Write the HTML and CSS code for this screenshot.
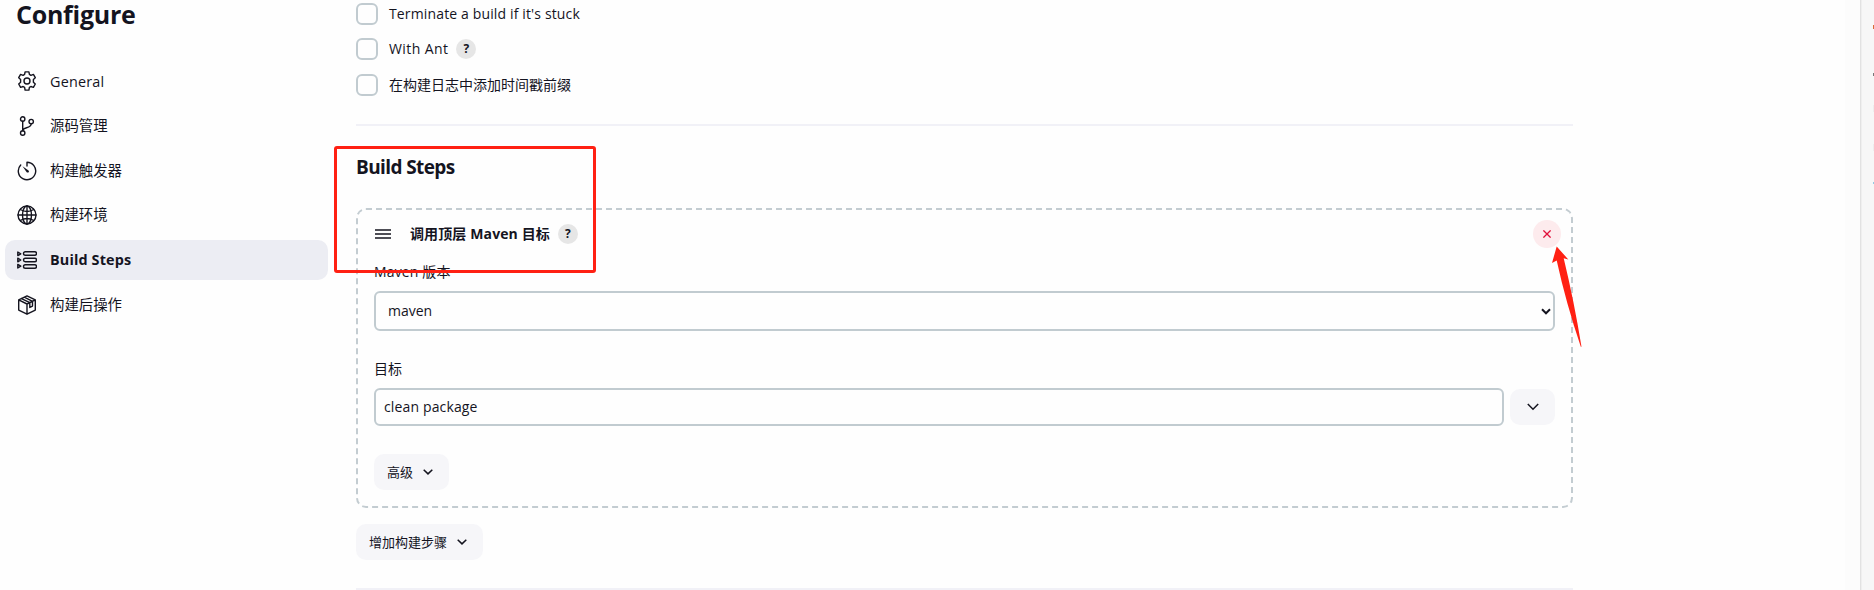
FILE: index.html
```html
<!DOCTYPE html>
<html lang="zh-CN">
<head>
<meta charset="utf-8">
<title>Configure</title>
<link rel="stylesheet" href="styles.css">
</head>
<body>
<div class="page">
  <aside class="sidebar">
    <h1 class="title">Configure</h1>
    <nav class="tasks">
      <a class="task task-general"><svg class="icon" viewBox="0 0 20 20"><path d="M8.1 .9h3.8l.5 2.5 1.5.9 2.5-.9 1.9 3.3-1.9 1.7v2.9l1.9 1.7-1.9 3.3-2.5-.8-1.5.9-.5 2.7H8.1l-.5-2.7-1.5-.9-2.5.8L1.700 13l1.900-1.700V8.400L1.700 6.700l1.900-3.300 2.500.9 1.500-.9z"/><circle cx="10" cy="10" r="3"/></svg><span class="latin">General</span></a>
      <a class="task"><svg class="icon" viewBox="0 0 20 20"><circle cx="5.700" cy="3" r="2.200"/><circle cx="14.200" cy="5.600" r="2.200"/><circle cx="5.700" cy="17" r="2.200"/><path d="M5.700 5.200v9.600M14.200 7.800c0 5-8.500 3-8.500 7"/></svg><span>源码管理</span></a>
      <a class="task"><svg class="icon" viewBox="0 0 20 20"><path d="M10 5V1.300a8.700 8.700 0 1 1-6.300 2.700"/><path class="solid" d="M5.500 5.200l6 4.200c1.300 1.300-.5 3-1.800 1.800z"/></svg><span>构建触发器</span></a>
      <a class="task"><svg class="icon" viewBox="0 0 20 20"><circle cx="10" cy="10" r="9"/><ellipse cx="10" cy="10" rx="4.500" ry="9"/><path d="M10 1v18M1 10h18M3.300 4.500q6.700 4 13.400 0M3.300 15.500q6.700-4 13.400 0"/></svg><span>构建环境</span></a>
      <a class="task task-active"><svg class="icon" viewBox="0 0 20 20"><path d="M.8 2v3.600l3-1.800zM.8 8.200v3.600l3-1.800zM.8 14.400V18l3-1.800z"/><rect x="6.500" y="1.700" width="13" height="3.600" rx="1.800"/><rect x="6.500" y="8.200" width="13" height="3.600" rx="1.800"/><rect x="6.500" y="14.700" width="13" height="3.600" rx="1.800"/></svg><span class="latin">Build Steps</span></a>
      <a class="task"><svg class="icon" viewBox="0 0 20 20"><path d="M10 .9l8.300 4v10.200L10 19.200l-8.300-4.100V4.900zM1.700 4.900L10 9l8.300-4.100M10 9v10.200M4.500 3.600l8.300 4.100v4.800l2.700-1.400V6.300L7.300 2.200"/></svg><span>构建后操作</span></a>
    </nav>
  </aside>

  <main class="content">
    <div class="options">
      <label class="option"><i class="checkbox"></i><span class="latin">Terminate a build if it's stuck</span></label>
      <label class="option"><i class="checkbox"></i><span class="latin ant">With Ant</span><b class="help">?</b></label>
      <label class="option"><i class="checkbox"></i><span>在构建日志中添加时间戳前缀</span></label>
    </div>
    <h2 class="section-title">Build Steps</h2>
    <section class="step">
      <header class="step-head">
        <svg class="grip" viewBox="0 0 16 10"><path d="M0 1h16M0 5h16M0 9h16"/></svg>
        <strong class="step-name">调用顶层 Maven 目标</strong>
        <b class="help">?</b>
        <span class="delete"><svg viewBox="0 0 8 8"><path d="M.4.4l7.200 7.200M7.600.4L.4 7.600"/></svg></span>
      </header>
      <div class="label latin">Maven 版本</div>
      <div class="select"><span>maven</span><svg viewBox="0 0 10 7"><path d="M1 1.300l4 4 4-4"/></svg></div>
      <div class="label label-goal">目标</div>
      <div class="goal-row">
        <div class="input"><span class="latin">clean package</span></div>
        <span class="button expand"><svg class="chevron-lg" viewBox="0 0 12 8"><path d="M.8 1l5.200 5.300L11.200 1"/></svg></span>
      </div>
      <span class="button advanced">高级<svg class="chevron" viewBox="0 0 10 6"><path d="M.7.7L5 4.900 9.300.7"/></svg></span>
    </section>
    <span class="button add">增加构建步骤<svg class="chevron" viewBox="0 0 10 6"><path d="M.7.7L5 4.900 9.300.7"/></svg></span>
    <hr class="rule">
  </main>
  <div class="gutter"></div>
  <div class="rail"><i class="mark orange"></i><i class="mark gray"></i><i class="mark pale"></i><i class="mark pale"></i><i class="mark blue"></i></div>

  <div class="callout"></div>
  <svg class="arrow" viewBox="0 0 30 101"><path d="M4.700.5L16.300 13.500l-4.600-1.200Q22 55 29.500 100.700h-.7Q14 57 4.700 14.500L0 17z"/></svg>
</div>
</body>
</html>
```
FILE: styles.css
```css
* { box-sizing: border-box; }
body {
  margin: 0;
  background: #fefefe;
  color: #14141f;
  font: 14px/20px "Open Sans", "Noto Sans CJK SC", sans-serif;
}
.page { position: relative; display: flex; width: 1874px; height: 590px; overflow: hidden; }
.latin { letter-spacing: .14px; }

.sidebar { width: 356px; padding-left: 5px; }
.title { margin: 0 0 32px 11px; height: 29px; font-size: 25px; line-height: 29px; font-weight: 700; letter-spacing: -.25px; }
.tasks { display: flex; flex-direction: column; gap: 4.800px; width: 323px; }
.task { display: flex; align-items: center; gap: 13px; height: 40px; padding-left: 12px; border-radius: 10px; font-size: 14.400px; }
.task-active { background: #ecedf3; font-weight: 700; }
.task-general span { padding-top: 1px; letter-spacing: .2px; }
.icon { width: 20px; height: 20px; fill: none; stroke: #14141f; stroke-width: 1.400; stroke-linejoin: round; stroke-linecap: round; }
.icon .solid { fill: #14141f; stroke: none; }

.content { width: 1217px; }
.options { display: flex; flex-direction: column; gap: 13px; height: 126px; padding-top: 3px; border-bottom: 2px solid #f1f1f7; }
.option { display: flex; align-items: center; height: 22px; }
.option:last-child { margin-top: 1px; }
.checkbox { width: 22px; height: 22px; margin-right: 11px; border: 2px solid #c1cbd0; border-radius: 6px; }
.ant { letter-spacing: .4px; }
.help { display: flex; align-items: center; justify-content: center; width: 20px; height: 20px; margin-left: 8px; border-radius: 50%; background: #e6e6e6; font-size: 12px; }
.section-title { margin: 29px 0; font-size: 19px; line-height: 24px; font-weight: 700; letter-spacing: -.6px; }

.step { height: 300px; padding: 10px 16px 0; border: 2px dashed #c3ccd1; border-radius: 10px; }
.step-head { display: flex; align-items: center; height: 28px; }
.grip { width: 16px; height: 10px; margin: 0 19px 0 1px; fill: none; stroke: #14141f; stroke-width: 1.400; }
.step-name { font-weight: 700; letter-spacing: .12px; }
.delete { display: flex; align-items: center; justify-content: center; width: 28px; height: 28px; margin: 0 -6px 0 auto; border-radius: 50%; background: #fdebed; }
.delete svg { width: 8px; height: 8px; fill: none; stroke: #e0103a; stroke-width: 1.300; }
.label { margin-top: 14px; height: 20px; }
.select { display: flex; align-items: center; justify-content: space-between; height: 40px; margin-top: 9px; padding: 0 2px 0 12px; border: 2px solid #c1cbd0; border-radius: 6px; }
.select svg { width: 10px; height: 7px; fill: none; stroke: #14141f; stroke-width: 2; }
.label-goal { margin-top: 28px; }
.goal-row { display: flex; gap: 6px; align-items: center; margin-top: 9px; }
.input { flex: 1; height: 38px; padding: 7px 8px; border: 2px solid #c1cbd0; border-radius: 6px; }
.button { display: flex; align-items: center; height: 36px; border-radius: 10px; background: #f6f6f9; font-size: 13px; }
.expand { width: 45px; justify-content: center; }
.advanced { width: 75px; margin-top: 28px; padding-left: 13px; }
.add { width: 127px; margin-top: 16px; padding-left: 13px; }
.chevron { width: 10px; height: 6px; margin-left: 10px; fill: none; stroke: #14141f; stroke-width: 1.500; }
.chevron-lg { width: 12px; height: 8px; fill: none; stroke: #14141f; stroke-width: 1.500; }
.rule { height: 2px; margin: 28px 0 0; border: 0; background: #f1f1f7; }

.gutter { width: 15px; margin-left: 272px; background: #fcfcfc; }
.rail { display: flex; flex-direction: column; align-items: flex-end; flex: 1; padding-top: 25px; border-left: 1px solid #e2e2e2; background: #f7f7f7; box-shadow: inset 1px 0 #efefef; }
.mark { width: 1px; height: 4px; }
.orange { background: #d96c36; }
.gray { margin-top: 44px; height: 3px; background: #777; }
.pale { margin-top: 29px; height: 7px; background: #eee; }
.pale + .pale { margin-top: 32px; }
.blue { margin-top: 31px; height: 2px; background: #93cbe5; }

/* Red annotations drawn over the form */
.callout { position: absolute; left: 334px; top: 146px; width: 262px; height: 127px; border: 3px solid #ff2013; border-radius: 3px; }
.arrow { position: absolute; left: 1552px; top: 246px; width: 30px; height: 101px; fill: #ff2013; }
```
